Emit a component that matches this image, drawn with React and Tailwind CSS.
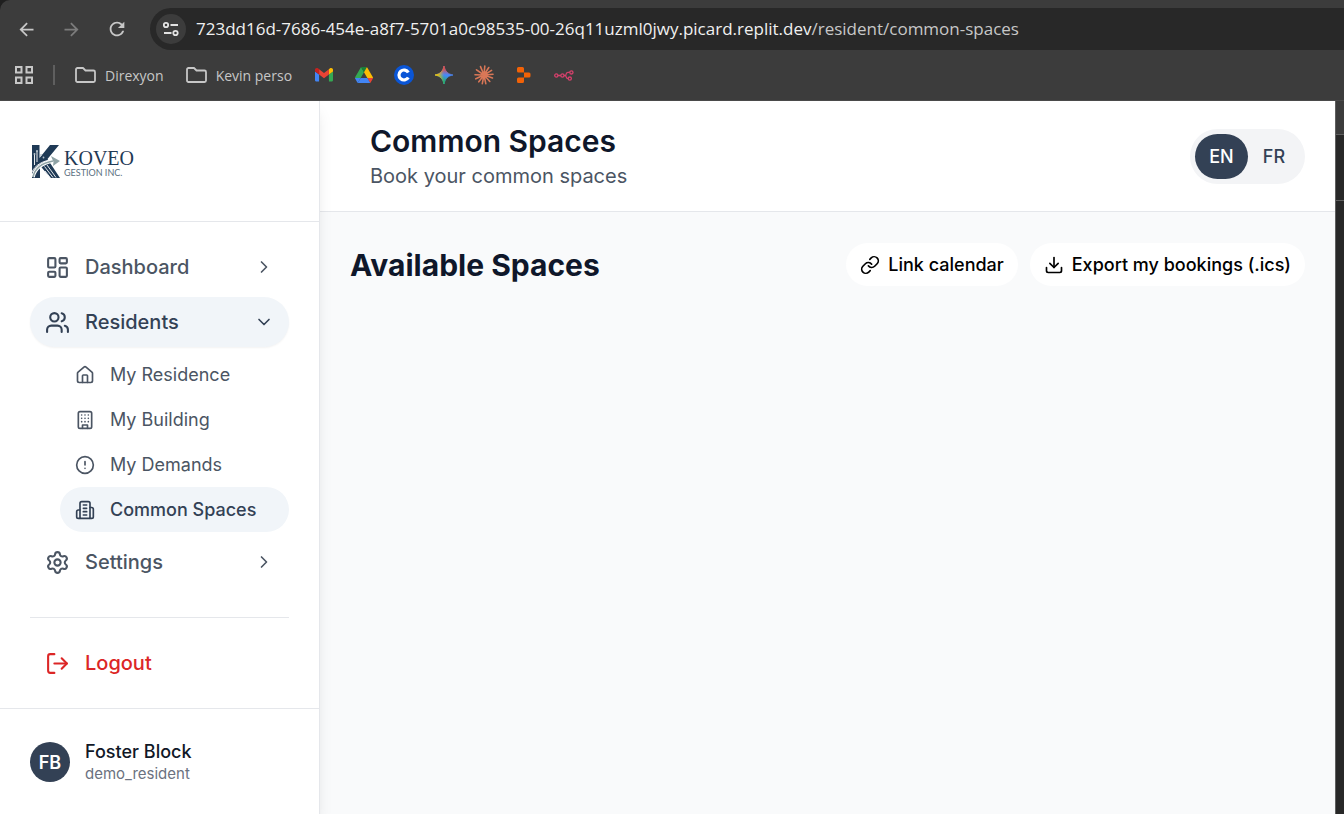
import React from "react";
import {
  LayoutDashboard,
  Users,
  House,
  CircleAlert,
  Settings,
  ChevronRight,
  ChevronDown,
  LogOut,
  Link,
  Download,
} from "lucide-react";
import { MdArrowBack, MdArrowForward, MdRefresh } from "react-icons/md";

const stroke = {
  viewBox: "0 0 24 24",
  fill: "none",
  stroke: "currentColor",
  strokeWidth: 2,
  strokeLinecap: "round",
  strokeLinejoin: "round",
};

function BuildingIcon({ className }) {
  return (
    <svg {...stroke} className={className} aria-hidden="true">
      <rect width="16" height="20" x="4" y="2" rx="2" />
      <path d="M9 22v-4h6v4M8 6h.01M16 6h.01M12 6h.01M12 10h.01M12 14h.01M16 10h.01M16 14h.01M8 10h.01M8 14h.01" />
    </svg>
  );
}

function TowerIcon({ className }) {
  return (
    <svg {...stroke} className={className} aria-hidden="true">
      <path d="M6 22V4a2 2 0 0 1 2-2h8a2 2 0 0 1 2 2v18Z" />
      <path d="M6 12H4a2 2 0 0 0-2 2v6a2 2 0 0 0 2 2h2M18 9h2a2 2 0 0 1 2 2v9a2 2 0 0 1-2 2h-2M10 6h4M10 10h4M10 14h4M10 18h4" />
    </svg>
  );
}

function TuneIcon() {
  return (
    <svg viewBox="0 0 18 16" className="h-4 w-[18px]" fill="none" stroke="#e3e3e3" strokeWidth="1.8" aria-hidden="true">
      <circle cx="4" cy="4" r="2.2" />
      <path d="M8.5 4H16M2 12h7.5" />
      <circle cx="13.5" cy="12" r="2.2" />
    </svg>
  );
}

function AppsIcon() {
  return (
    <svg viewBox="0 0 18 18" className="size-[18px]" fill="none" stroke="#c7c7c7" strokeWidth="2" aria-hidden="true">
      <path d="M1 1h5.5v5.5H1zM11.5 1H17v5.5h-5.500zM1 11.5h5.5V17H1zM11.5 11.5H17V17h-5.500z" />
    </svg>
  );
}

function FolderIcon() {
  return (
    <svg viewBox="0 0 21 16" className="h-4 w-[21px]" fill="none" stroke="#c7c7c7" strokeWidth="1.8" strokeLinejoin="round" aria-hidden="true">
      <path d="M2.5 1H8l2.5 2.500h8A1.500 1.500 0 0 1 20 5v8.500a1.500 1.500 0 0 1-1.500 1.500h-16A1.500 1.500 0 0 1 1 13.500v-11A1.500 1.500 0 0 1 2.500 1z" />
    </svg>
  );
}

function GmailIcon() {
  return (
    <svg viewBox="52 42 88 66" className="w-[18px]" aria-hidden="true">
      <path fill="#4285f4" d="M58 108h14V74L52 59v43c0 3.320 2.690 6 6 6" />
      <path fill="#34a853" d="M120 108h14c3.320 0 6-2.690 6-6V59l-20 15" />
      <path fill="#fbbc04" d="M120 48v26l20-15v-8c0-7.420-8.470-11.650-14.400-7.200" />
      <path fill="#ea4335" d="M72 74V48l24 18 24-18v26L96 92" />
      <path fill="#c5221f" d="M52 51v8l20 15V48l-5.600-4.200c-5.940-4.450-14.400-.22-14.400 7.200" />
    </svg>
  );
}

function DriveIcon() {
  return (
    <svg viewBox="0 0 87.3 78" className="w-[18px]" aria-hidden="true">
      <path fill="#4285f4" d="m6.600 66.850 3.850 6.650c.8 1.400 1.950 2.500 3.300 3.300l13.750-23.800h-27.500c0 1.550.4 3.100 1.200 4.500z" />
      <path fill="#34a853" d="m43.650 25-13.750-23.800c-1.350.8-2.500 1.900-3.300 3.300l-25.400 44a9.060 9.060 0 0 0-1.200 4.500h27.500z" />
      <path fill="#ea4335" d="m73.550 76.800c1.350-.8 2.500-1.900 3.300-3.300l1.600-2.750 7.650-13.250c.8-1.400 1.200-2.950 1.200-4.500h-27.500l5.850 11.500z" />
      <path fill="#188038" d="m43.650 25 13.750-23.800c-1.350-.8-2.900-1.200-4.500-1.200h-18.500c-1.600 0-3.150.45-4.500 1.200z" />
      <path fill="#4285f4" d="m59.800 53h-32.300l-13.750 23.800c1.350.8 2.900 1.200 4.500 1.200h50.800c1.600 0 3.150-.45 4.500-1.200z" />
      <path fill="#fbbc04" d="m73.400 26.500-12.700-22c-.8-1.400-1.950-2.500-3.300-3.300l-13.750 23.800 16.150 28h27.450c0-1.550-.4-3.100-1.200-4.500z" />
    </svg>
  );
}

function CoinIcon() {
  return (
    <svg viewBox="0 0 20 20" className="size-5" aria-hidden="true">
      <circle cx="10" cy="10" r="10" fill="#0a55d6" />
      <path d="M14.300 7.500A5 5 0 1 0 14.300 12.500" fill="none" stroke="#fff" strokeWidth="3.2" />
    </svg>
  );
}

function GeminiIcon() {
  const star = "M12 0c.9 6.500 5.500 11.100 12 12-6.500.9-11.100 5.500-12 12-.9-6.500-5.500-11.100-12-12C6.500 11.100 11.100 6.500 12 0z";
  return (
    <svg viewBox="0 0 24 24" className="size-[18px]" aria-hidden="true">
      <defs>
        <linearGradient id="gem-red" x1="12" y1="0" x2="12" y2="12" gradientUnits="userSpaceOnUse">
          <stop offset="0.2" stopColor="#f04438" />
          <stop offset="1" stopColor="#f04438" stopOpacity="0" />
        </linearGradient>
        <linearGradient id="gem-yellow" x1="0" y1="12" x2="12" y2="12" gradientUnits="userSpaceOnUse">
          <stop offset="0.2" stopColor="#f6c000" />
          <stop offset="1" stopColor="#f6c000" stopOpacity="0" />
        </linearGradient>
        <linearGradient id="gem-green" x1="9" y1="24" x2="13" y2="12" gradientUnits="userSpaceOnUse">
          <stop offset="0.2" stopColor="#1fb25a" />
          <stop offset="1" stopColor="#1fb25a" stopOpacity="0" />
        </linearGradient>
      </defs>
      <path fill="#4489fb" stroke="#4489fb" strokeWidth="1" d={star} />
      <path fill="url(#gem-green)" stroke="url(#gem-green)" d={star} />
      <path fill="url(#gem-red)" stroke="url(#gem-red)" d={star} />
      <path fill="url(#gem-yellow)" stroke="url(#gem-yellow)" d={star} />
    </svg>
  );
}

function BurstIcon() {
  return (
    <svg viewBox="0 0 20 20" className="size-5" stroke="#d97757" strokeWidth="1.6" strokeLinecap="round" aria-hidden="true">
      <path d="M10 10 10.800 1M10 10 14.800 2.500M10 10 17.600 5.400M10 10 19 9.300M10 10 18.500 13M10 10 15.800 16.500M10 10 11.800 18.600M10 10 8.300 18.600M10 10 4.800 16.800M10 10 1.800 13.800M10 10 1 9.700M10 10 2.500 4.800M10 10 6.500 1.600" />
    </svg>
  );
}

function ReplIcon() {
  return (
    <svg viewBox="0 0 14 16" className="h-4 w-3.5" fill="#f26207" aria-hidden="true">
      <path d="M1.500 0h4A1.500 1.500 0 0 1 7 1.500v4H1.500A1.500 1.500 0 0 1 0 4V1.500A1.500 1.500 0 0 1 1.500 0zM7 5.500h5A1.500 1.500 0 0 1 13.500 7v2a1.500 1.500 0 0 1-1.500 1.500H7zM1.500 10.500H7v4A1.500 1.500 0 0 1 5.500 16h-4A1.500 1.500 0 0 1 0 14.500V12a1.500 1.500 0 0 1 1.500-1.500z" />
    </svg>
  );
}

function NodesIcon() {
  return (
    <svg viewBox="0 0 20 11" className="w-5" fill="none" stroke="#d6406c" strokeWidth="1.3" aria-hidden="true">
      <circle cx="2.3" cy="5.5" r="1.6" />
      <circle cx="8.4" cy="5.5" r="1.6" />
      <circle cx="17.4" cy="2.4" r="1.6" />
      <circle cx="15.8" cy="8.6" r="1.6" />
      <path d="M3.900 5.500h2.900M10 5.500h1M15.800 2.400H14c-1.500 0-1.600.8-1.800 1.600-.1.900-.4 1.500-1.200 1.500.8 0 1.100.6 1.200 1.400.2 1 .6 1.700 2 1.700" />
    </svg>
  );
}

function KoveoMark() {
  return (
    <svg viewBox="0 0 28 33" className="h-[33px] w-7" aria-hidden="true">
      <path fill="#1f3a56" d="M0 0h7.500v13L18 0h9L15.500 14 28 33h-9.500L8 20.500V33H0z" />
      <g fill="none" stroke="#fff" strokeWidth="0.9">
        <path d="M0 27C3 20.500 10 15.800 21 14.500M2.500 20V9M5 17V6M12.500 21.500l8.500 11M15 20l9 12.500M13 26l5.500 7" />
      </g>
      <path fill="none" stroke="#fff" strokeWidth="3.6" d="M1 32C3 23 10 18 21 16" />
      <path fill="none" stroke="#8fa3a6" strokeWidth="1.6" d="M1 32C3 23 10 18 21 16" />
      <path fill="#8fa3a6" d="M19 11l9 5-7 5 .5-4z" />
      <g fill="#b9c6cf">
        <circle cx="2.5" cy="9" r="1" />
        <circle cx="5" cy="6" r="1" />
        <circle cx="9" cy="10" r="1" />
        <circle cx="11.5" cy="12.5" r="0.9" />
      </g>
    </svg>
  );
}

function Bookmark({ label, children }) {
  return (
    <a href="#" aria-label={label} className="flex w-5 items-center justify-center">
      {children}
    </a>
  );
}

function BrowserBar() {
  return (
    <header className="h-[101px] shrink-0 bg-[#1f1f1f] font-['Open_Sans','Noto_Sans',sans-serif]">
      <div className="flex h-full flex-col overflow-hidden rounded-tl-[10px] border-b border-[#4a4a4a] bg-[#3c3c3c]">
        <div className="flex h-[58px] shrink-0 items-center pl-4">
          <button aria-label="Back" className="mr-6 text-[#c7c7c7]"><MdArrowBack className="size-[21px]" /></button>
          <button aria-label="Forward" className="mr-6 text-[#7c7c7c]"><MdArrowForward className="size-[21px]" /></button>
          <button aria-label="Reload" className="mr-[22px] text-[#c7c7c7]"><MdRefresh className="size-[22px]" /></button>
          <div className="flex h-[42px] min-w-0 flex-1 items-center rounded-l-full bg-[#282828] pl-1.5">
            <button aria-label="Site information" className="flex size-[30px] shrink-0 items-center justify-center rounded-full bg-[#3c3c3c]">
              <TuneIcon />
            </button>
            <p className="ml-[10px] truncate text-[17px] text-[#c7c7c7]">
              <span className="text-[#f0f0f0]">723dd16d-7686-454e-a8f7-5701a0c98535-00-26q11uzml0jwy.picard.replit.dev</span>/resident/common-spaces
            </p>
          </div>
        </div>
        <nav aria-label="Bookmarks" className="flex h-[34px] items-center pl-[15px] text-[14px] text-[#c7c7c7]">
          <button aria-label="Apps"><AppsIcon /></button>
          <span className="ml-5 h-5 w-0.5 bg-[#5f5f5f]" />
          <a href="#" className="ml-5 flex items-center gap-[9px]"><FolderIcon />Direxyon</a>
          <a href="#" className="ml-[22px] flex items-center gap-[9px]"><FolderIcon />Kevin perso</a>
          <div className="ml-[22px] flex gap-5">
            <Bookmark label="Gmail"><GmailIcon /></Bookmark>
            <Bookmark label="Drive"><DriveIcon /></Bookmark>
            <Bookmark label="Coinbase"><CoinIcon /></Bookmark>
            <Bookmark label="Gemini"><GeminiIcon /></Bookmark>
            <Bookmark label="Claude"><BurstIcon /></Bookmark>
            <Bookmark label="Replit"><ReplIcon /></Bookmark>
            <Bookmark label="n8n"><NodesIcon /></Bookmark>
          </div>
        </nav>
      </div>
    </header>
  );
}

function MenuButton({ icon: Icon, label, open }) {
  const Chevron = open ? ChevronDown : ChevronRight;
  return (
    <button
      aria-expanded={!!open}
      className={
        "flex h-[50px] w-full items-center rounded-full px-[15px] text-[20px] font-medium " +
        (open ? "bg-[#f1f5f9] text-[#334155] shadow-xs" : "text-[#4b5563]")
      }
    >
      <Icon className="mr-[15px] size-[25px]" />
      <span className="flex-1 text-left">{label}</span>
      <Chevron className="size-5" />
    </button>
  );
}

function SubLink({ icon: Icon, label, active }) {
  return (
    <a
      href="#"
      aria-current={active ? "page" : undefined}
      className={
        "flex h-[45px] items-center gap-[15px] rounded-full px-[15px] text-[18px] " +
        (active ? "bg-[#f1f5f9] font-medium text-[#334155]" : "text-[#4b5563]")
      }
    >
      <Icon className="size-5" />
      {label}
    </a>
  );
}

function Sidebar() {
  return (
    <aside className="z-10 flex w-80 shrink-0 flex-col border-r border-[#e5e7eb] bg-white shadow-lg">
      <div className="flex h-[121px] items-center border-b border-[#e5e7eb] px-8">
        <a href="#" className="flex items-center gap-1 text-[#1f3a56]">
          <KoveoMark />
          <span className="flex flex-col pt-1">
            <span className="font-['Liberation_Serif',serif] text-[20px] leading-5">KOVEO</span>
            <span className="font-['Lato',sans-serif] text-[9px] leading-[10px] text-[#5b6f80]">GESTION INC.</span>
          </span>
        </a>
      </div>
      <nav aria-label="Main" className="px-[30px] pt-5">
        <ul className="flex flex-col gap-[5px]">
          <li><MenuButton icon={LayoutDashboard} label="Dashboard" /></li>
          <li>
            <MenuButton icon={Users} label="Residents" open />
            <ul className="mt-[5px] pl-[30px]">
              <li><SubLink icon={House} label="My Residence" /></li>
              <li><SubLink icon={BuildingIcon} label="My Building" /></li>
              <li><SubLink icon={CircleAlert} label="My Demands" /></li>
              <li><SubLink icon={TowerIcon} label="Common Spaces" active /></li>
            </ul>
          </li>
          <li><MenuButton icon={Settings} label="Settings" /></li>
        </ul>
        <div className="mt-[30px] border-t border-[#e5e7eb] pt-5">
          <button className="flex h-[50px] w-full items-center gap-[15px] rounded-full px-[15px] text-[20px] font-medium text-[#dc2626]">
            <LogOut className="size-[25px]" />
            Logout
          </button>
        </div>
      </nav>
      <div className="mt-5 flex items-center gap-[15px] border-t border-[#e5e7eb] px-[30px] pt-[31px]">
        <div className="flex size-10 items-center justify-center rounded-full bg-[#334155] text-[18px] font-semibold text-white">FB</div>
        <div>
          <p className="text-[18px] leading-6 font-medium text-[#111827]">Foster Block</p>
          <p className="text-[15px] leading-5 text-[#6b7280]">demo_resident</p>
        </div>
      </div>
    </aside>
  );
}

function Main() {
  return (
    <div className="flex min-w-0 flex-1 flex-col bg-[#f9fafb]">
      <header className="flex h-[111px] items-center justify-between border-b border-[#e5e7eb] bg-white pr-[30px] pl-[50px]">
        <div>
          <h1 className="text-[30px] leading-10 font-semibold text-[#0f172a]">Common Spaces</h1>
          <p className="text-[20px] leading-[30px] text-[#4b5563]">Book your common spaces</p>
        </div>
        <div role="group" aria-label="Language" className="flex rounded-full bg-[#f3f4f6] p-[5px] text-[18px] font-medium">
          <button aria-pressed="true" className="h-[45px] w-[53px] rounded-full bg-[#334155] text-white">EN</button>
          <button aria-pressed="false" className="h-[45px] w-[52px] rounded-full text-[#334155]">FR</button>
        </div>
      </header>
      <main className="px-[30px] pt-[31px]">
        <div className="flex items-center justify-between">
          <h2 className="text-[30px] leading-10 font-bold text-[#0f172a]">Available Spaces</h2>
          <div className="flex gap-3 text-[18px] font-medium text-black">
            <button className="flex h-[43px] items-center gap-2 rounded-full bg-white px-3.5">
              <Link className="size-5" />
              Link calendar
            </button>
            <button className="flex h-[43px] items-center gap-2 rounded-full bg-white px-3.5">
              <Download className="size-5" />
              Export my bookings (.ics)
            </button>
          </div>
        </div>
      </main>
    </div>
  );
}

export default function App() {
  return (
    <div className="flex min-h-screen flex-col bg-white">
      <BrowserBar />
      <div className="flex flex-1 font-['Inter',sans-serif]">
        <Sidebar />
        <Main />
        <div aria-hidden="true" className="flex w-[9px] shrink-0 flex-col border-l border-[#5f5f5f] bg-[#282828]">
          <div className="h-[34px] border-b border-[#5f5f5f] bg-[#3c3c3c]" />
          <div className="h-[66px] border-b border-[#5f5f5f]" />
        </div>
      </div>
    </div>
  );
}
